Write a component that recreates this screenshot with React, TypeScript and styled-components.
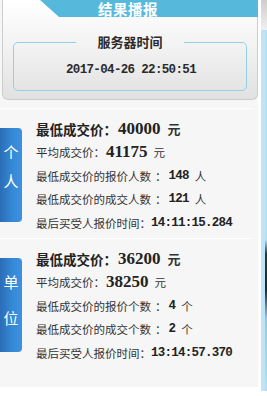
import React from "react";
import styled, { createGlobalStyle } from "styled-components";

const GlobalStyle = createGlobalStyle`
  html, body { margin: 0; padding: 0; background: #ffffff; }
  body { font-family: "Noto Sans CJK SC", "Liberation Sans", sans-serif; color: #333; }
`;

const CJK = `"Noto Sans CJK SC", "Liberation Sans", sans-serif`;
const MONO = `"Liberation Mono", "DejaVu Sans Mono", monospace`;
const SERIF = `"Liberation Serif", "DejaVu Serif", serif`;

const Page = styled.div`
  display: flex;
  align-items: flex-start;
  width: 267px;
  height: 396px;
`;

const Panel = styled.main`
  width: 258px;
  height: 387px;
  background: #f6f6f6;
  display: flex;
  flex-direction: column;
`;

const HeaderCard = styled.section`
  margin-left: 2px;
  height: 99px;
  border: 1px solid #cdcdcd;
  border-top: none;
  border-radius: 0 0 6px 6px;
  background: linear-gradient(#ffffff 0%, #f3f3f3 45%, #e1e1e1 100%);
  display: flex;
  flex-direction: column;
`;

const TitleTab = styled.h2`
  margin: 0 -1px 0 0;
  height: 17px;
  background: #56b9dc;
  clip-path: polygon(37px 0, 100% 0, 100% 100%, 56px 100%);
  color: #ffffff;
  font-family: ${CJK};
  font-size: 14.5px;
  font-weight: 700;
  line-height: 17px;
  text-align: center;
  padding-right: 5px;
  letter-spacing: 0.5px;
`;

const TimeBox = styled.fieldset`
  margin: 16px 10px 0 10px;
  padding: 0 0 12px;
  border: 1.5px solid #90d1e8;
  border-radius: 5px;
  min-width: 0;
`;

const TimeLegend = styled.legend`
  margin: 0 auto;
  padding: 0 21px;
  font-family: ${CJK};
  font-size: 13px;
  font-weight: 700;
  line-height: 18px;
  color: #2b2b2b;
`;

const TimeValue = styled.div`
  margin-top: 11px;
  text-align: center;
  font-family: ${MONO};
  font-size: 12.5px;
  font-weight: 700;
  letter-spacing: -0.66px;
  line-height: 16px;
  color: #2a2a2a;
  padding-left: 2px;
`;

const Divider = styled.hr<{ $top?: number }>`
  margin: ${(p) => p.$top ?? 0}px 0 0;
  width: 252px;
  height: 1px;
  border: none;
  background: #ffffff;
`;

const Section = styled.section<{ $grow?: boolean }>`
  display: flex;
  align-items: flex-start;
  padding-top: 8px;
  height: ${(p) => (p.$grow ? "auto" : "121px")};
  flex: ${(p) => (p.$grow ? "1" : "none")};
`;

const SideTab = styled.div<{ $gap: number }>`
  margin-top: 11px;
  width: 22px;
  height: 94px;
  flex: none;
  border-radius: 0 4px 4px 0;
  background: linear-gradient(90deg, #2b6db6 0%, #3588d6 55%, #3b92e2 100%);
  color: #ffffff;
  font-family: ${CJK};
  font-size: 15px;
  line-height: 16px;
  display: flex;
  flex-direction: column;
  align-items: center;
  padding-top: 16px;
  gap: ${(p) => p.$gap}px;
  box-sizing: border-box;
`;

const Info = styled.div`
  margin-left: 14px;
  display: flex;
  flex-direction: column;
`;

const Row = styled.div`
  height: 23.5px;
  display: flex;
  align-items: center;
  white-space: nowrap;
  font-family: ${CJK};
  font-size: 11.5px;
  color: #333;
`;

const LeadLabel = styled.span`
  font-size: 13.5px;
  font-weight: 700;
  color: #222;
`;

const BigNum = styled.span`
  font-family: ${SERIF};
  font-size: 17px;
  font-weight: 700;
  color: #222;
  margin-left: 1px;
`;

const Unit = styled.span<{ $strong?: boolean }>`
  margin-left: ${(p) => (p.$strong ? "7px" : "6px")};
  font-size: ${(p) => (p.$strong ? "13px" : "11.5px")};
  font-weight: ${(p) => (p.$strong ? 700 : 400)};
  color: #333;
`;

const Sep = styled.span`
  margin: 0 2px 0 4px;
`;

const SmallNum = styled.span`
  font-family: ${MONO};
  font-size: 12.5px;
  letter-spacing: -0.75px;
  font-weight: 700;
  color: #222;
`;

const Strip = styled.aside`
  margin-left: 3px;
  width: 6px;
  height: 391px;
  background: linear-gradient(#cdcdcd 0px, #e9e9e9 24px, #f0f0f0 30px, #bfe3f8 30px, #bfe3f8 100%);
`;

const StripEdge = styled.div`
  margin-left: 4px;
  margin-top: 30px;
  width: 2px;
  height: 361px;
  background: linear-gradient(
    #b9dff4 0%,
    #b9dff4 58%,
    #2a3a2c 62%,
    #1e2a22 72%,
    #9fc3d8 80%,
    #b9dff4 100%
  );
`;

type Stat = { label: string; value: string; unit: string };

type Block = {
  side: [string, string];
  gap: number;
  low: string;
  avg: string;
  stats: Stat[];
  time: string;
};

const blocks: Block[] = [
  {
    side: ["个", "人"],
    gap: 13,
    low: "40000",
    avg: "41175",
    stats: [
      { label: "最低成交价的报价人数", value: "148", unit: "人" },
      { label: "最低成交价的成交人数", value: "121", unit: "人" },
    ],
    time: "14:11:15.284",
  },
  {
    side: ["单", "位"],
    gap: 20,
    low: "36200",
    avg: "38250",
    stats: [
      { label: "最低成交价的报价个数", value: "4", unit: "个" },
      { label: "最低成交价的成交个数", value: "2", unit: "个" },
    ],
    time: "13:14:57.370",
  },
];

function ResultBlock({ b, grow }: { b: Block; grow?: boolean }) {
  return (
    <Section $grow={grow}>
      <SideTab $gap={b.gap}>
        <span>{b.side[0]}</span>
        <span>{b.side[1]}</span>
      </SideTab>
      <Info>
        <Row>
          <LeadLabel>最低成交价：</LeadLabel>
          <BigNum>{b.low}</BigNum>
          <Unit $strong>元</Unit>
        </Row>
        <Row>
          <span>平均成交价：</span>
          <BigNum>{b.avg}</BigNum>
          <Unit>元</Unit>
        </Row>
        {b.stats.map((s) => (
          <Row key={s.label}>
            <span>{s.label}</span>
            <Sep>：</Sep>
            <SmallNum>{s.value}</SmallNum>
            <Unit>{s.unit}</Unit>
          </Row>
        ))}
        <Row>
          <span>最后买受人报价时间：</span>
          <SmallNum>{b.time}</SmallNum>
        </Row>
      </Info>
    </Section>
  );
}

export default function App() {
  return (
    <>
      <GlobalStyle />
      <Page>
        <Panel>
          <HeaderCard>
            <TitleTab>结果播报</TitleTab>
            <TimeBox>
              <TimeLegend>服务器时间</TimeLegend>
              <TimeValue>2017-04-26 22:50:51</TimeValue>
            </TimeBox>
          </HeaderCard>
          <Divider $top={8} />
          <ResultBlock b={blocks[0]} />
          <Divider />
          <ResultBlock b={blocks[1]} grow />
        </Panel>
        <Strip>
          <StripEdge />
        </Strip>
      </Page>
    </>
  );
}
